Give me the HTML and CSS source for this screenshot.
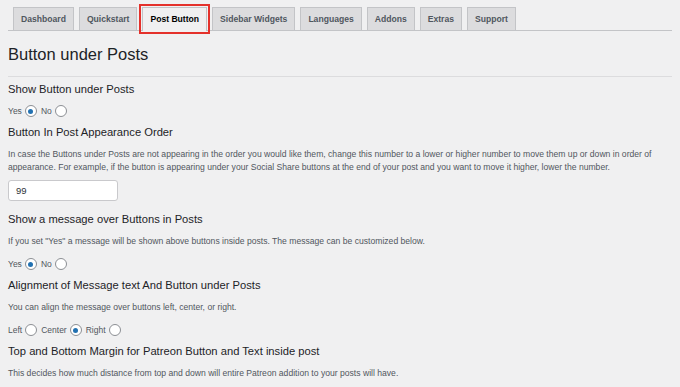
FILE: index.html
```html
<!DOCTYPE html>
<html lang="en">
<head>
  <meta charset="UTF-8">
  <meta name="viewport" content="width=device-width, initial-scale=1.0">
  <title>Post Button</title>
  <link rel="stylesheet" href="styles.css">
</head>
<body>

<div class="wrap">
  <!-- 탭 메뉴 -->
  <nav class="nav-tabs">
    <a class="nav-tab" href="#">Dashboard</a>
    <a class="nav-tab" href="#">Quickstart</a>
    <a class="nav-tab nav-tab-active" href="#">Post Button</a>
    <a class="nav-tab" href="#">Sidebar Widgets</a>
    <a class="nav-tab" href="#">Languages</a>
    <a class="nav-tab" href="#">Addons</a>
    <a class="nav-tab" href="#">Extras</a>
    <a class="nav-tab" href="#">Support</a>
  </nav>

  <h1 class="page-title">Button under Posts</h1>

  <div class="field">
    <h3 class="field-title">Show Button under Posts</h3>
    <div class="radio-row">
      <label>Yes <span class="radio checked"></span></label>
      <label>No <span class="radio"></span></label>
    </div>
  </div>

  <div class="field">
    <h3 class="field-title">Button In Post Appearance Order</h3>
    <p class="field-desc">In case the Buttons under Posts are not appearing in the order you would like them, change this number to a lower or higher number to move them up or down in order of appearance. For example, if the button is appearing under your Social Share buttons at the end of your post and you want to move it higher, lower the number.</p>
    <input type="text" class="text-input" value="99">
  </div>

  <div class="field">
    <h3 class="field-title">Show a message over Buttons in Posts</h3>
    <p class="field-desc">If you set "Yes" a message will be shown above buttons inside posts. The message can be customized below.</p>
    <div class="radio-row">
      <label>Yes <span class="radio checked"></span></label>
      <label>No <span class="radio"></span></label>
    </div>
  </div>

  <div class="field">
    <h3 class="field-title">Alignment of Message text And Button under Posts</h3>
    <p class="field-desc">You can align the message over buttons left, center, or right.</p>
    <div class="radio-row">
      <label>Left <span class="radio"></span></label>
      <label>Center <span class="radio checked"></span></label>
      <label>Right <span class="radio"></span></label>
    </div>
  </div>

  <div class="field">
    <h3 class="field-title">Top and Bottom Margin for Patreon Button and Text inside post</h3>
    <p class="field-desc">This decides how much distance from top and down will entire Patreon addition to your posts will have.</p>
  </div>
</div>

</body>
</html>
```

FILE: styles.css
```css
body {
  margin: 0;
  background-color: #f0f0f1;
  font-family: "Liberation Sans", Arial, sans-serif;
  color: #1d2327;
}

.wrap {
  padding: 0 8px;
}

/* 탭 메뉴 */
.nav-tabs {
  display: flex;
  gap: 5px;
  padding: 7px 0 0 5px;
  border-bottom: 1px solid #c3c4c7;
}

.nav-tab {
  display: block;
  height: 22px;
  line-height: 22px;
  padding: 0 7px;
  margin-bottom: -1px;
  background-color: #dcdcde;
  border: 1px solid #c3c4c7;
  border-bottom: none;
  color: #50575e;
  font-size: 8.6px;
  font-weight: bold;
  text-decoration: none;
}

.nav-tab-active {
  background-color: #f0f0f1;
  color: #000;
  height: 23px;
  outline: 2px solid #e4312b;
  outline-offset: 1px;
}

.page-title {
  margin: 0;
  padding: 12px 0 11px;
  font-size: 16.5px;
  font-weight: normal;
  line-height: 22px;
  border-bottom: 1px solid #dcdcde;
}

.field {
  padding-top: 6px;
}

.field:first-of-type {
  padding-top: 4px;
}

.field-title {
  margin: 0;
  font-size: 11.2px;
  font-weight: normal;
  line-height: 16px;
}

.field-desc {
  margin: 8px 0 0;
  font-size: 8.6px;
  line-height: 13px;
  color: #50575e;
}

.radio-row {
  display: flex;
  gap: 4px;
  margin-top: 7px;
  font-size: 8.5px;
  line-height: 14px;
  color: #50575e;
}

.field-desc + .radio-row {
  margin-top: 9px;
}

.radio-row label {
  display: flex;
  align-items: center;
  gap: 3px;
}

.radio {
  display: inline-block;
  width: 10px;
  height: 10px;
  border: 1px solid #8c8f94;
  border-radius: 50%;
  background-color: #fff;
  position: relative;
}

.radio.checked::before {
  content: "";
  position: absolute;
  top: 2.5px;
  left: 2.5px;
  width: 5px;
  height: 5px;
  border-radius: 50%;
  background-color: #2271b1;
}

.text-input {
  display: block;
  box-sizing: border-box;
  width: 110px;
  height: 21px;
  margin: 6px 0 4px;
  padding: 0 7px;
  border: 1px solid #c9c9cc;
  border-radius: 3px;
  background-color: #fff;
  font-family: "Liberation Sans", Arial, sans-serif;
  font-size: 9.5px;
  color: #2c3338;
}
```
